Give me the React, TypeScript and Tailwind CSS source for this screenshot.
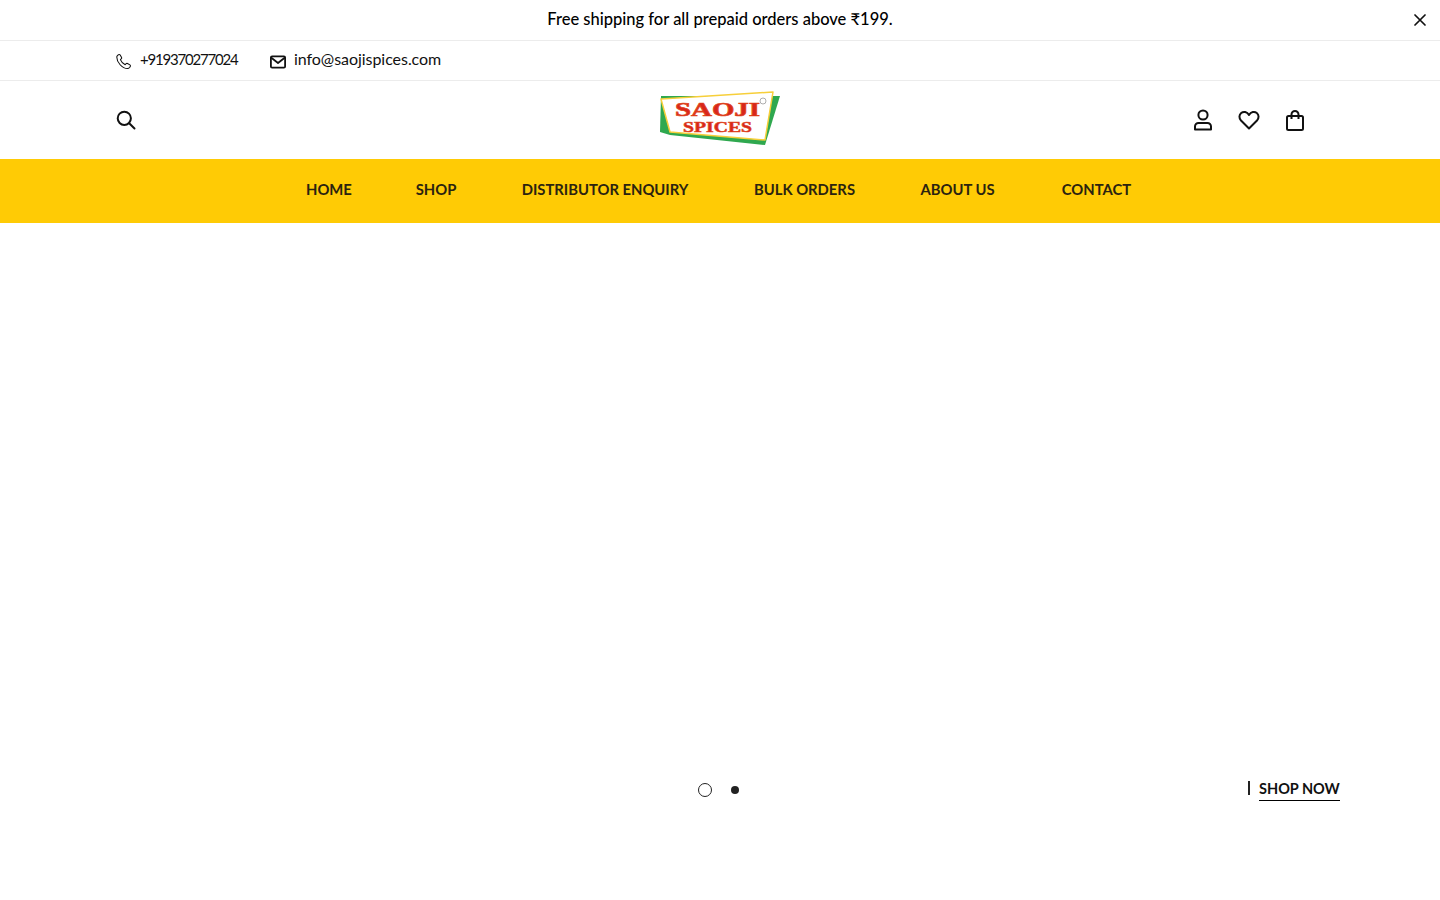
import React from "react";

const font = { fontFamily: '"Lato", "Noto Sans", sans-serif' };

function Logo() {
  return (
    <svg width="122" height="56" viewBox="0 0 122 56" className="block">
      <polygon points="2,6 121,6 106,55 11,45 1,42" fill="#2fa84f" />
      <polygon points="2,9 114,2 106,50 11,42" fill="#ffffff" stroke="#f7cf3a" strokeWidth="1.500" strokeLinejoin="round" />
      <text x="58.500" y="25.500" textAnchor="middle" fontFamily='"Liberation Serif", serif' fontWeight="700" fontSize="19.500" fill="#d8261c" stroke="#e0481c" strokeWidth="0.700" textLength="85" lengthAdjust="spacingAndGlyphs">SAOJI</text>
      <text x="58.500" y="42" textAnchor="middle" fontFamily='"Liberation Serif", serif' fontWeight="700" fontSize="14" fill="#d8261c" stroke="#e0481c" strokeWidth="0.500" textLength="69" lengthAdjust="spacingAndGlyphs">SPICES</text>
      <circle cx="104" cy="11" r="3" fill="#fff" stroke="#999" strokeWidth="0.800" />
    </svg>
  );
}

function Phone() {
  return (
    <svg width="17" height="17" viewBox="0 0 24 24" fill="none" stroke="#111" strokeWidth="1.500" strokeLinecap="round" strokeLinejoin="round">
      <path d="M2.500 5.500c0-1.500 2-3.500 3.500-3.500.6 0 1 .3 1.300.8l2 3.500c.3.6.2 1.200-.3 1.700L7.600 9.300c1.200 3 3.600 5.700 6.800 7.200l1.400-1.400c.5-.5 1.200-.6 1.800-.3l3.500 2c.5.3.8.8.7 1.400-.2 1.700-2.200 3.800-4 3.800C10 22 2.500 13 2.500 5.500z" />
    </svg>
  );
}

function Mail() {
  return (
    <svg width="16" height="14" viewBox="0 0 16 14" fill="none" stroke="#111" strokeWidth="1.800" strokeLinejoin="round">
      <rect x="0.900" y="1.300" width="14.200" height="11.400" rx="1.200" />
      <path d="M1 2.500 8 8l7-5.500" />
    </svg>
  );
}

function Search() {
  return (
    <svg width="20" height="20" viewBox="0 0 20 20" fill="none" stroke="#111" strokeWidth="2" strokeLinecap="round">
      <circle cx="8.300" cy="8.300" r="6.600" />
      <path d="m13.200 13.200 5.300 5.300" />
    </svg>
  );
}

function User() {
  return (
    <svg width="20" height="22" viewBox="0 0 20 22" fill="none" stroke="#111" strokeWidth="2">
      <circle cx="10" cy="6" r="4.600" />
      <path d="M5.500 14h9a3.500 3.500 0 0 1 3.500 3.500V20.500H2V17.500A3.500 3.500 0 0 1 5.500 14z" strokeLinejoin="round" />
    </svg>
  );
}

function Heart() {
  return (
    <svg width="22" height="20" viewBox="0 0 22 20" fill="none" stroke="#111" strokeWidth="2" strokeLinejoin="round">
      <path d="M11 18.500 3 10.500C.8 8.200 1 4.800 3.200 3c2.300-1.800 5.800-1.300 7.800 2 2-3.300 5.500-3.800 7.800-2 2.200 1.800 2.400 5.200.2 7.500z" />
    </svg>
  );
}

function Bag() {
  return (
    <svg width="18" height="21" viewBox="0 0 18 21" fill="none" stroke="#111" strokeWidth="2" strokeLinejoin="round">
      <rect x="1" y="6" width="16" height="14" rx="1.500" />
      <path d="M5.500 9V4.500a3.500 3.500 0 0 1 7 0V9" />
    </svg>
  );
}

const nav = [
  { label: "HOME", w: "w-[45px]" },
  { label: "SHOP", w: "w-[42px]" },
  { label: "DISTRIBUTOR ENQUIRY", w: "w-[168px]" },
  { label: "BULK ORDERS", w: "w-[103px]" },
  { label: "ABOUT US", w: "w-[75px]" },
  { label: "CONTACT", w: "w-[75px]" },
];

export default function App() {
  return (
    <div style={font} className="min-h-[900px] bg-white text-[#111]">
      <div className="relative flex h-[41px] items-center justify-center border-b border-[#ececec] pb-[2px] text-[16.500px] font-medium text-black">
        Free shipping for all prepaid orders above ₹199.
        <svg className="absolute right-[14px] top-[14px]" width="12" height="12" viewBox="0 0 12 12" fill="none" stroke="#111" strokeWidth="1.700" strokeLinecap="round">
          <path d="m1 1 10 10M11 1 1 11" />
        </svg>
      </div>

      <div className="flex h-[40px] items-center border-b border-[#ececec] pl-[115px]">
        <div className="flex items-center gap-[8px]">
          <span className="mt-[2px]"><Phone /></span>
          <span className="mb-[3px] w-[98px] whitespace-nowrap text-[15px] tracking-[-1.200px]">+919370277024</span>
        </div>
        <div className="ml-[32px] flex items-center gap-[8px]">
          <span className="mt-[2px]"><Mail /></span>
          <span className="mb-[3px] text-[16px] tracking-[-0.050px]">info@saojispices.com</span>
        </div>
      </div>

      <div className="relative flex h-[78px] items-center justify-between pl-[116px] pr-[136px]">
        <Search />
        <div className="absolute left-[659px] top-[9px]"><Logo /></div>
        <div className="flex items-center">
          <User />
          <span className="ml-[25px] mr-[26px]"><Heart /></span>
          <Bag />
        </div>
      </div>

      <nav className="flex h-[64px] items-center justify-center gap-[64px] bg-[#ffcb05] pb-[3px] text-[14.800px] font-bold text-[#2b2310]">
        {nav.map((n) => (
          <span key={n.label} className={`${n.w} whitespace-nowrap text-center`}>{n.label}</span>
        ))}
      </nav>

      <main className="relative h-[677px]">
        <div className="absolute left-[698px] top-[560px] h-[14px] w-[14px] rounded-full border border-[#222]" />
        <div className="absolute left-[731px] top-[563px] h-[8px] w-[8px] rounded-full bg-[#222]" />
        <div className="absolute left-[1248px] top-[558px] h-[14px] w-[2px] bg-[#222]" />
        <div className="absolute left-[1259px] top-[556px] border-b border-black pb-[1px] text-[14.500px] font-bold leading-[20px]">
          SHOP NOW
        </div>
      </main>
    </div>
  );
}
